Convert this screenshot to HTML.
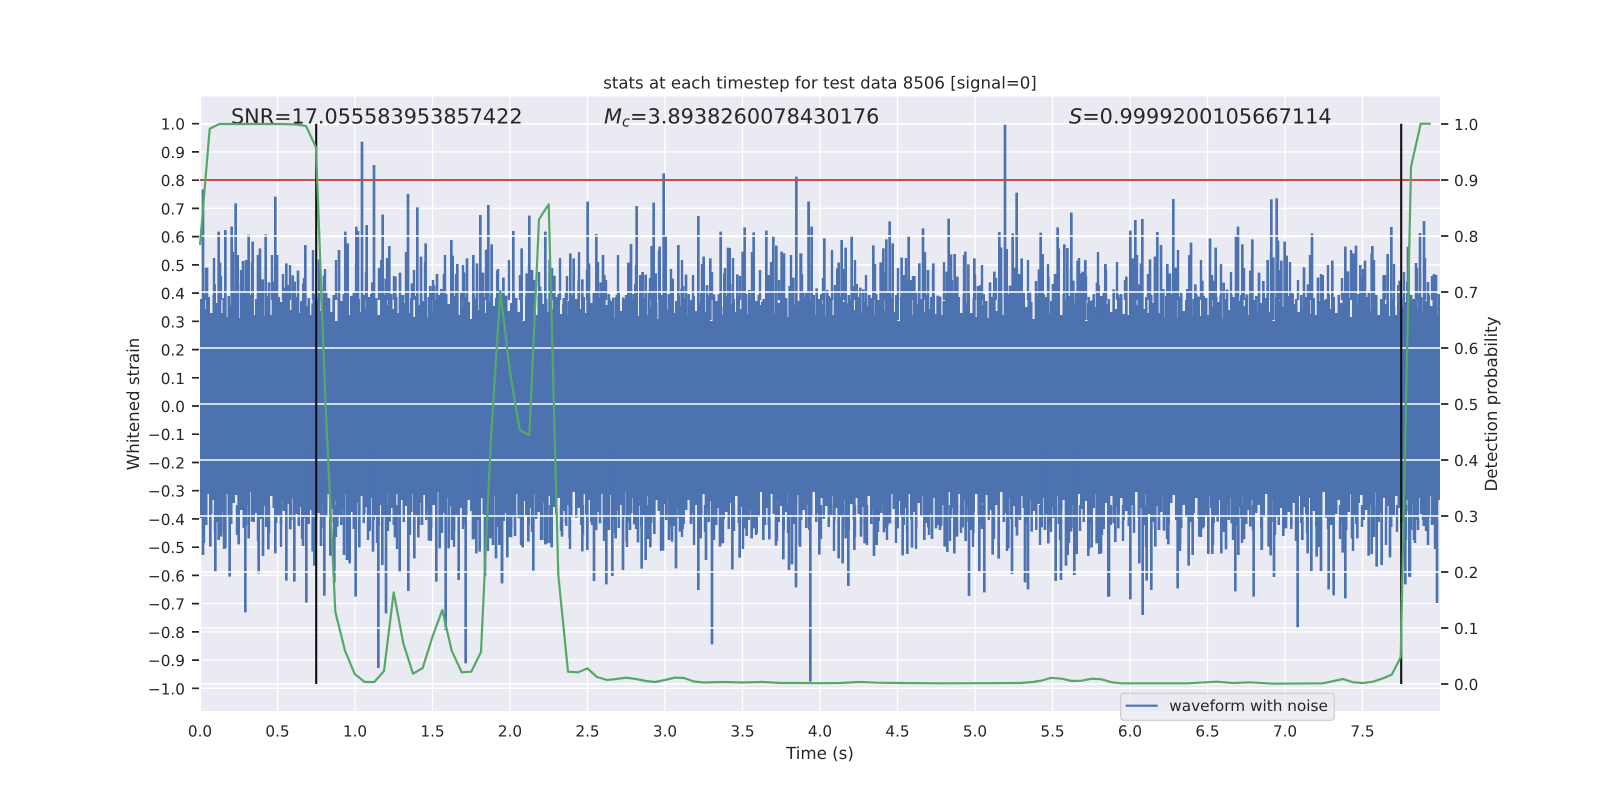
<!DOCTYPE html>
<html><head><meta charset="utf-8"><title>stats</title>
<style>html,body{margin:0;padding:0;background:#fff}svg{display:block}text{font-family:"DejaVu Sans","Liberation Sans",sans-serif;fill:#262626;text-rendering:geometricPrecision}</style></head>
<body>
<svg width="1600" height="800" viewBox="0 0 1600 800" xmlns="http://www.w3.org/2000/svg">
<defs>
<pattern id="pu" patternUnits="userSpaceOnUse" x="200" y="285" width="187.5" height="60"><path fill="#4c72b0" d="M0 60V14h2.5V9h2.5V24h2.5V12h2.5V28h2.5V10h2.5V18h2.5V8h2.5V28h2.5V13h2.5V32h2.5V11h2.5V20h2.5V9h2.5V16h2.5V33h2.5V12h2.5V8h2.5V26h2.5V15h2.5V10h2.5V30h2.5V14h2.5V9h2.5V19h2.5V31h2.5V11h2.5V13h2.5V30h2.5V8h2.5V22h2.5V12h2.5V17h2.5V34h2.5V10h2.5V14h2.5V25h2.5V9h2.5V12h2.5V28h2.5V16h2.5V10h2.5V21h2.5V13h2.5V30h2.5V9h2.5V15h2.5V11h2.5V26h2.5V18h2.5V8h2.5V13h2.5V27h2.5V10h2.5V36h2.5V12h2.5V16h2.5V9h2.5V22h2.5V30h2.5V11h2.5V8h2.5V19h2.5V14h2.5V27h2.5V10h2.5V24h2.5V12h2.5V9h2.5V29h2.5V13h2.5V30h2.5V16h2.5V10h2.5V20h2.5V60Z"/></pattern>
<pattern id="pl" patternUnits="userSpaceOnUse" x="200" y="470" width="187.5" height="75"><path fill="#4c72b0" d="M0 0V48h2.5V38h2.5V55h2.5V24h2.5V44h2.5V30h2.5V52h2.5V36h2.5V60h2.5V42h2.5V24h2.5V46h2.5V54h2.5V33h2.5V25h2.5V50h2.5V40h2.5V58h2.5V35h2.5V47h2.5V22h2.5V52h2.5V43h2.5V28h2.5V49h2.5V36h2.5V57h2.5V45h2.5V26h2.5V38h2.5V53h2.5V46h2.5V30h2.5V41h2.5V60h2.5V34h2.5V50h2.5V28h2.5V44h2.5V56h2.5V37h2.5V48h2.5V26h2.5V54h2.5V40h2.5V30h2.5V51h2.5V43h2.5V35h2.5V58h2.5V47h2.5V24h2.5V39h2.5V52h2.5V31h2.5V45h2.5V55h2.5V38h2.5V24h2.5V49h2.5V42h2.5V59h2.5V33h2.5V46h2.5V26h2.5V53h2.5V37h2.5V44h2.5V28h2.5V50h2.5V41h2.5V56h2.5V35h2.5V47h2.5V22h2.5V0Z"/></pattern>
<pattern id="pu2" patternUnits="userSpaceOnUse" x="200" y="240" width="173" height="60"><path fill="none" stroke="#4c72b0" stroke-width="2.4" d="M6 28V60M14 18V60M21 36V60M33 12V60M41 30V60M52 22V60M60 40V60M72 15V60M83 34V60M90 25V60M104 38V60M113 10V60M125 29V60M136 20V60M147 35V60M156 24V60M166 32V60"/></pattern>
<pattern id="pl2" patternUnits="userSpaceOnUse" x="200" y="505" width="173" height="50"><path fill="none" stroke="#4c72b0" stroke-width="2.4" d="M4 0V38M15 0V26M24 0V44M37 0V30M46 0V20M58 0V36M69 0V28M81 0V42M90 0V24M102 0V34M115 0V46M124 0V22M136 0V32M148 0V40M159 0V27M168 0V35"/></pattern>
</defs>
<rect width="1600" height="800" fill="#fff"/>
<rect x="200" y="96.5" width="1240" height="614.5" fill="#eaeaf2"/>
<!-- x grid + left y grid -->
<path fill="none" stroke="#fff" stroke-width="1.4" d="M200.5 96.5V711M277.5 96.5V711M355 96.5V711M432.5 96.5V711M510 96.5V711M587.5 96.5V711M665 96.5V711M742.5 96.5V711M820 96.5V711M897.5 96.5V711M975 96.5V711M1052.5 96.5V711M1130 96.5V711M1207.5 96.5V711M1285 96.5V711M1362.5 96.5V711M200 123.7H1440M200 151.9H1440M200 180.2H1440M200 208.4H1440M200 236.6H1440M200 264.9H1440M200 293.1H1440M200 321.3H1440M200 349.6H1440M200 377.8H1440M200 406H1440M200 434.2H1440M200 462.5H1440M200 490.7H1440M200 518.9H1440M200 547.2H1440M200 575.4H1440M200 603.6H1440M200 631.9H1440M200 660.1H1440M200 688.3H1440"/>
<!-- waveform body -->
<rect x="200" y="340" width="1240" height="135" fill="#4c72b0"/>
<rect x="200" y="285" width="1240" height="60" fill="url(#pu)"/>
<rect x="200" y="470" width="1240" height="75" fill="url(#pl)"/>
<rect x="200" y="240" width="1240" height="60" fill="url(#pu2)"/>
<rect x="200" y="505" width="1240" height="50" fill="url(#pl2)"/>
<g fill="none" stroke="#4c72b0">
<g transform="translate(197 120) scale(.33333)" stroke-width="8"><path d="M18 208V600M30 443V600M53 493V600M65 335V600M69 428V600M85 330V600M104 320V600M116 250V600M122 405V600M132 492V600M138 423V600M147 420V600M155 344V600M167 365V600M183 405V600M189 385V600M197 478V600M206 343V600M216 487V600M228 485V600M235 230V600M240 405V600M260 502V600M268 430V600M274 495V600M287 466V600M293 485V600M303 452V600M319 490V600M325 375V600M347 550V600M366 418V600M381 467V600M396 537V600M410 537V600M426 390V600M445 335V600M452 370V600M478 320V600M483 333V600M495 65V600M509 315V600M526 487V600M531 135V600M557 284V600M553 420V600M566 476V600M577 378V600M595 470V600M609 458V600M618 525V600M633 222V600M629 405V600M645 490V600M661 262V600M672 410V600M686 370V600M700 498V600M711 497V600M720 462V600M733 507V600M741 462V600M763 360V600M767 407V600M781 432V600M801 457V600M810 415V600M829 405V600M840 430V600M850 285V600M858 458V600M874 255V600M871 388V600M884 373V600M901 452V600M919 473V600"/></g>
<g transform="translate(500 120) scale(.33333)" stroke-width="8"><path d="M10 473V600M18 527V600M40 333V600M65 385V600M80 460V600M88 287V600M96 450V600M104 480V600M120 500V600M136 335V600M149 418V600M163 467V600M171 550V600M190 553V600M198 515V600M211 400V600M221 415V600M236 482V600M247 478V600M263 245V600M267 430V600M289 342V600M302 487V600M309 405V600M313 465V600M328 535V600M340 533V600M351 525V600M370 532V600M385 428V600M393 372V600M406 492V600M410 258V600M421 465V600M428 456V600M437 464V600M455 378V600M461 248V600M467 460V600M479 380V600M491 160V600M497 347V600M518 476V600M535 375V600M545 505V600M549 498V600M558 464V600M595 288V600M611 410V600M621 495V600M631 415V600M642 523V600M662 335V600M673 460V600M684 383V600M689 384V600M698 492V600M712 463V600M728 395V600M734 322V600M748 510V600M761 337V600M787 545V600M799 332V600M806 465V600M820 348V600M829 377V600M845 395V600M852 400V600M869 498V600M880 473V600M889 170V600M903 400V600M910 517V600M926 245V600"/></g>
<g transform="translate(800 120) scale(.33333)" stroke-width="8"><path d="M2 400V600M26 245V600M35 320V600M50 505V600M73 355V600M82 510V600M105 495V600M112 445V600M116 428V600M125 360V600M137 383V600M145 550V600M155 346V600M158 498V600M170 492V600M181 503V600M190 508V600M208 525V600M220 376V600M242 427V600M250 385V600M259 358V600M269 304V600M278 370V600M293 527V600M305 413V600M313 465V600M322 478V600M326 346V600M332 480V600M343 468V600M358 430V600M369 325V600M384 450V600M400 430V600M413 527V600M420 530V600M440 455V600M446 296V600M453 403V600M464 402V600M472 470V600M496 395V600M505 433V600M523 415V600M534 498V600M542 495V600M570 487V600M583 455V600M598 336V600M603 382V600M615 10V600M620 387V600M630 497V600M638 340V600M645 443V600M650 218V600M657 462V600M665 415V600M690 515V600M708 483V600M717 448V600M722 338V600M728 402V600M745 470V600M759 492V600M765 462V600M773 322V600M776 385V600M793 373V600M802 384V600M814 278V600M820 482V600M833 422V600M840 460V600M848 455V600M856 420V600M865 550V600M878 540V600M891 488V600M896 495V600M916 432V600"/></g>
<g transform="translate(1100 120) scale(.33333)" stroke-width="8"><path d="M16 432V600M41 508V600M55 523V600M79 470V600M91 332V600M99 415V600M106 300V600M117 493V600M127 297V600M123 430V600M150 418V600M165 410V600M172 336V600M183 375V600M190 507V600M202 432V600M210 460V600M220 237V600M227 443V600M236 530V600M262 507V600M268 405V600M273 368V600M286 493V600M296 530V600M307 482V600M330 355V600M347 383V600M343 482V600M362 527V600M371 488V600M381 508V600M408 346V600M414 320V600M427 373V600M441 523V600M451 452V600M457 358V600M477 458V600M490 483V600M503 420V600M514 238V600M520 412V600M530 235V600M534 362V600M544 422V600M554 365V600M560 407V600M570 537V600M578 520V600M612 442V600M624 493V600M636 340V600M654 473V600M668 465V600M676 540V600M697 422V600M736 380V600M744 454V600M760 400V600M768 377V600M781 435V600M788 468V600M795 422V600M815 400V600M817 378V600M851 465V600M863 402V600M874 321V600M882 560V600M895 495V600M899 482V600M922 485V600M926 380V600"/></g>
<path stroke-width="2.6" d="M1408 247V320M1416 263V320M1420 233V320M1424 221V320M1428 282V320M1434 274V320M1436 275V320"/>
<g transform="translate(197 450) scale(.33333)" stroke-width="8"><path d="M18 0V315M40 0V290M55 0V365M65 0V270M72 0V260M85 0V295M98 0V380M125 0V283M145 0V487M155 0V265M165 0V215M185 0V370M198 0V318M214 0V298M235 0V310M252 0V222M268 0V392M280 0V238M292 0V395M305 0V195M318 0V288M328 0V458M347 0V305M352 0V347M372 0V288M382 0V437M400 0V317M412 0V398M421 0V230M441 0V315M450 0V330M458 0V340M476 0V440M487 0V292M502 0V190M518 0V243M528 0V305M538 0V200M544 0V654M556 0V345M567 0V490M578 0V215M594 0V262M608 0V368M634 0V423M652 0V325M664 0V262M675 0V225M696 0V272M718 0V395M728 0V295M746 0V540M755 0V295M765 0V270M771 0V240M785 0V390M806 0V640M828 0V268M838 0V310M848 0V305M864 0V378M880 0V265M888 0V285M897 0V325M907 0V285M915 0V400"/></g>
<g transform="translate(500 450) scale(.33333)" stroke-width="8"><path d="M6 0V400M22 0V322M33 0V262M45 0V258M56 0V205M68 0V292M85 0V275M100 0V362M127 0V270M136 0V283M142 0V280M155 0V292M186 0V260M198 0V218M209 0V265M247 0V304M262 0V300M282 0V393M300 0V220M319 0V403M327 0V240M337 0V378M347 0V265M369 0V360M380 0V275M390 0V240M403 0V223M414 0V277M425 0V356M437 0V330M451 0V292M463 0V252M489 0V302M507 0V270M516 0V275M528 0V355M540 0V245M548 0V237M573 0V222M595 0V420M602 0V265M618 0V330M636 0V583M660 0V290M667 0V280M697 0V358M719 0V323M733 0V235M740 0V258M755 0V265M763 0V235M770 0V250M790 0V270M808 0V268M828 0V287M850 0V328M867 0V360M876 0V343M888 0V412M899 0V285M928 0V240"/></g>
<g transform="translate(800 450) scale(.33333)" stroke-width="8"><path d="M0 0V285M31 0V695M58 0V314M103 0V212M116 0V325M128 0V340M137 0V265M145 0V408M163 0V300M183 0V260M194 0V280M222 0V318M230 0V285M252 0V247M262 0V228M270 0V220M293 0V235M308 0V316M322 0V312M336 0V293M373 0V270M385 0V232M396 0V267M408 0V235M420 0V240M434 0V290M442 0V306M463 0V310M471 0V260M488 0V232M497 0V273M507 0V438M520 0V250M538 0V367M553 0V427M578 0V314M596 0V326M625 0V295M636 0V372M651 0V257M660 0V210M675 0V397M684 0V418M695 0V245M725 0V232M735 0V240M745 0V280M767 0V393M783 0V390M798 0V347M803 0V315M813 0V245M823 0V375M830 0V312M865 0V318M875 0V292M890 0V280M898 0V312M925 0V440"/></g>
<g transform="translate(1100 450) scale(.33333)" stroke-width="8"><path d="M3 0V310M27 0V440M46 0V276M55 0V235M91 0V448M118 0V340M128 0V495M140 0V392M154 0V420M166 0V290M177 0V240M192 0V242M205 0V283M233 0V415M240 0V280M266 0V347M278 0V315M298 0V260M308 0V235M325 0V312M337 0V312M353 0V215M364 0V310M378 0V298M395 0V220M406 0V424M415 0V315M432 0V268M451 0V230M461 0V440M485 0V300M506 0V290M512 0V316M522 0V381M550 0V258M558 0V235M574 0V222M593 0V532M607 0V270M623 0V310M634 0V363M650 0V320M663 0V363M686 0V418M701 0V436M728 0V308M736 0V445M756 0V265M772 0V265M806 0V317M815 0V312M830 0V350M845 0V345M870 0V322M916 0V403M928 0V380"/></g>
<path stroke-width="2.6" d="M1410 450V577M1414 450V540M1418 450V530M1423 450V520M1428 450V545M1432 450V525M1437 450V603"/>
</g>
<!-- right axis grid -->
<path fill="none" stroke="#fff" stroke-width="1.4" d="M200 124H1440M200 180H1440M200 236H1440M200 292H1440M200 348H1440M200 404H1440M200 460H1440M200 516H1440M200 572H1440M200 628H1440M200 684H1440"/>
<!-- annotation text -->
<text x="231" y="123.7" font-size="20.75">SNR=17.055583953857422</text>
<text x="604" y="123.7" font-size="20.83"><tspan font-style="italic">M</tspan><tspan font-style="italic" font-size="14.6" dy="3">c</tspan><tspan dy="-3">=3.8938260078430176</tspan></text>
<text x="1069" y="123.7" font-size="20.83"><tspan font-style="italic">S</tspan>=0.9999200105667114</text>
<!-- red / black / green -->
<path fill="none" stroke="#c44e52" stroke-width="2.1" d="M200 180H1440"/>
<path fill="none" stroke="#111" stroke-width="2.1" d="M316.2 123.7V684M1401.2 123.7V684"/>
<polyline fill="none" stroke="#55a868" stroke-width="2.2" stroke-linejoin="round" points="200,245 209.7,128.7 219.4,124 229,124 238.8,124 248.4,124 258,124 268,124 277.5,124 287,124.2 297,124.5 306,126 316,147.3 325.5,403 335.3,611.7 345,650.7 354.7,674 364.7,682 374.3,682 384,671 393.7,592.3 403.3,643.3 413,673.7 422.7,668 432.3,637.3 442.3,610 451.7,650.7 461.7,672.3 471.3,671.7 481,652 490.6,446 500.3,291 510,372 519.7,430 529.4,435 539,219.3 548.7,204.3 558.3,575 568,671.7 578,672.3 587.5,668.4 597,677 607,680 616.6,679 626,677.6 636,679 646,681 655,682 665,680 675,677.6 684,678 694,681.5 704,682.5 723,682 742,682.5 762,682 781,683 800,683 820,683.2 840,683 859,682 878,682.7 900,683 940,683.3 980,683.2 1020,683 1033,682 1042,680.5 1051,677.8 1061.7,678.7 1071.7,681 1081.7,680.7 1091.7,678.7 1101.7,679.3 1111.7,682.3 1121.7,683.3 1150,683.3 1188,683.3 1216.7,681.7 1233,683 1250,682.3 1273,683.7 1323,683.3 1343,679 1353,682.3 1363,683 1373,681.7 1383,678.3 1391.7,674.7 1400.7,657.3 1411,166.7 1420.7,123.7 1430.7,123.7"/>
<!-- ticks -->
<path fill="none" stroke="#262626" stroke-width="1.7" d="M192 123.7H199M192 151.9H199M192 180.2H199M192 208.4H199M192 236.6H199M192 264.9H199M192 293.1H199M192 321.3H199M192 349.6H199M192 377.8H199M192 406H199M192 434.2H199M192 462.5H199M192 490.7H199M192 518.9H199M192 547.2H199M192 575.4H199M192 603.6H199M192 631.9H199M192 660.1H199M192 688.3H199M1441 124H1448.3M1441 180H1448.3M1441 236H1448.3M1441 292H1448.3M1441 348H1448.3M1441 404H1448.3M1441 460H1448.3M1441 516H1448.3M1441 572H1448.3M1441 628H1448.3M1441 684H1448.3"/>
<g font-size="15.28" text-anchor="end">
<text x="185" y="129.7">1.0</text><text x="185" y="157.9">0.9</text><text x="185" y="186.2">0.8</text><text x="185" y="214.4">0.7</text><text x="185" y="242.6">0.6</text><text x="185" y="270.9">0.5</text><text x="185" y="299.1">0.4</text><text x="185" y="327.3">0.3</text><text x="185" y="355.6">0.2</text><text x="185" y="383.8">0.1</text><text x="185" y="412">0.0</text><text x="185" y="440.2">−0.1</text><text x="185" y="468.5">−0.2</text><text x="185" y="496.7">−0.3</text><text x="185" y="524.9">−0.4</text><text x="185" y="553.2">−0.5</text><text x="185" y="581.4">−0.6</text><text x="185" y="609.6">−0.7</text><text x="185" y="637.9">−0.8</text><text x="185" y="666.1">−0.9</text><text x="185" y="694.3">−1.0</text>
</g>
<g font-size="15.28">
<text x="1454" y="129.8">1.0</text><text x="1454" y="185.8">0.9</text><text x="1454" y="241.8">0.8</text><text x="1454" y="297.8">0.7</text><text x="1454" y="353.8">0.6</text><text x="1454" y="409.8">0.5</text><text x="1454" y="465.8">0.4</text><text x="1454" y="521.8">0.3</text><text x="1454" y="577.8">0.2</text><text x="1454" y="633.8">0.1</text><text x="1454" y="689.8">0.0</text>
</g>
<g font-size="15.28" text-anchor="middle">
<text x="200" y="736.7">0.0</text><text x="277.5" y="736.7">0.5</text><text x="355" y="736.7">1.0</text><text x="432.5" y="736.7">1.5</text><text x="510" y="736.7">2.0</text><text x="587.5" y="736.7">2.5</text><text x="665" y="736.7">3.0</text><text x="742.5" y="736.7">3.5</text><text x="820" y="736.7">4.0</text><text x="897.5" y="736.7">4.5</text><text x="975" y="736.7">5.0</text><text x="1052.5" y="736.7">5.5</text><text x="1130" y="736.7">6.0</text><text x="1207.5" y="736.7">6.5</text><text x="1285" y="736.7">7.0</text><text x="1362.5" y="736.7">7.5</text>
</g>
<!-- labels -->
<text x="820" y="88.4" font-size="16.6" text-anchor="middle">stats at each timestep for test data 8506 [signal=0]</text>
<text x="820" y="759" font-size="16.67" text-anchor="middle">Time (s)</text>
<text transform="translate(139 404) rotate(-90)" font-size="16.67" text-anchor="middle">Whitened strain</text>
<text transform="translate(1497 404) rotate(-90)" font-size="16.67" text-anchor="middle">Detection probability</text>
<!-- legend -->
<rect x="1120.7" y="693.3" width="213.6" height="27" rx="3" fill="#eaeaf2" fill-opacity=".8" stroke="#cccccc" stroke-width="1.2"/>
<path fill="none" stroke="#4c72b0" stroke-width="2.1" d="M1125.7 705.7H1157.7"/>
<text x="1169.3" y="710.9" font-size="15.28">waveform with noise</text>
</svg>
</body></html>
